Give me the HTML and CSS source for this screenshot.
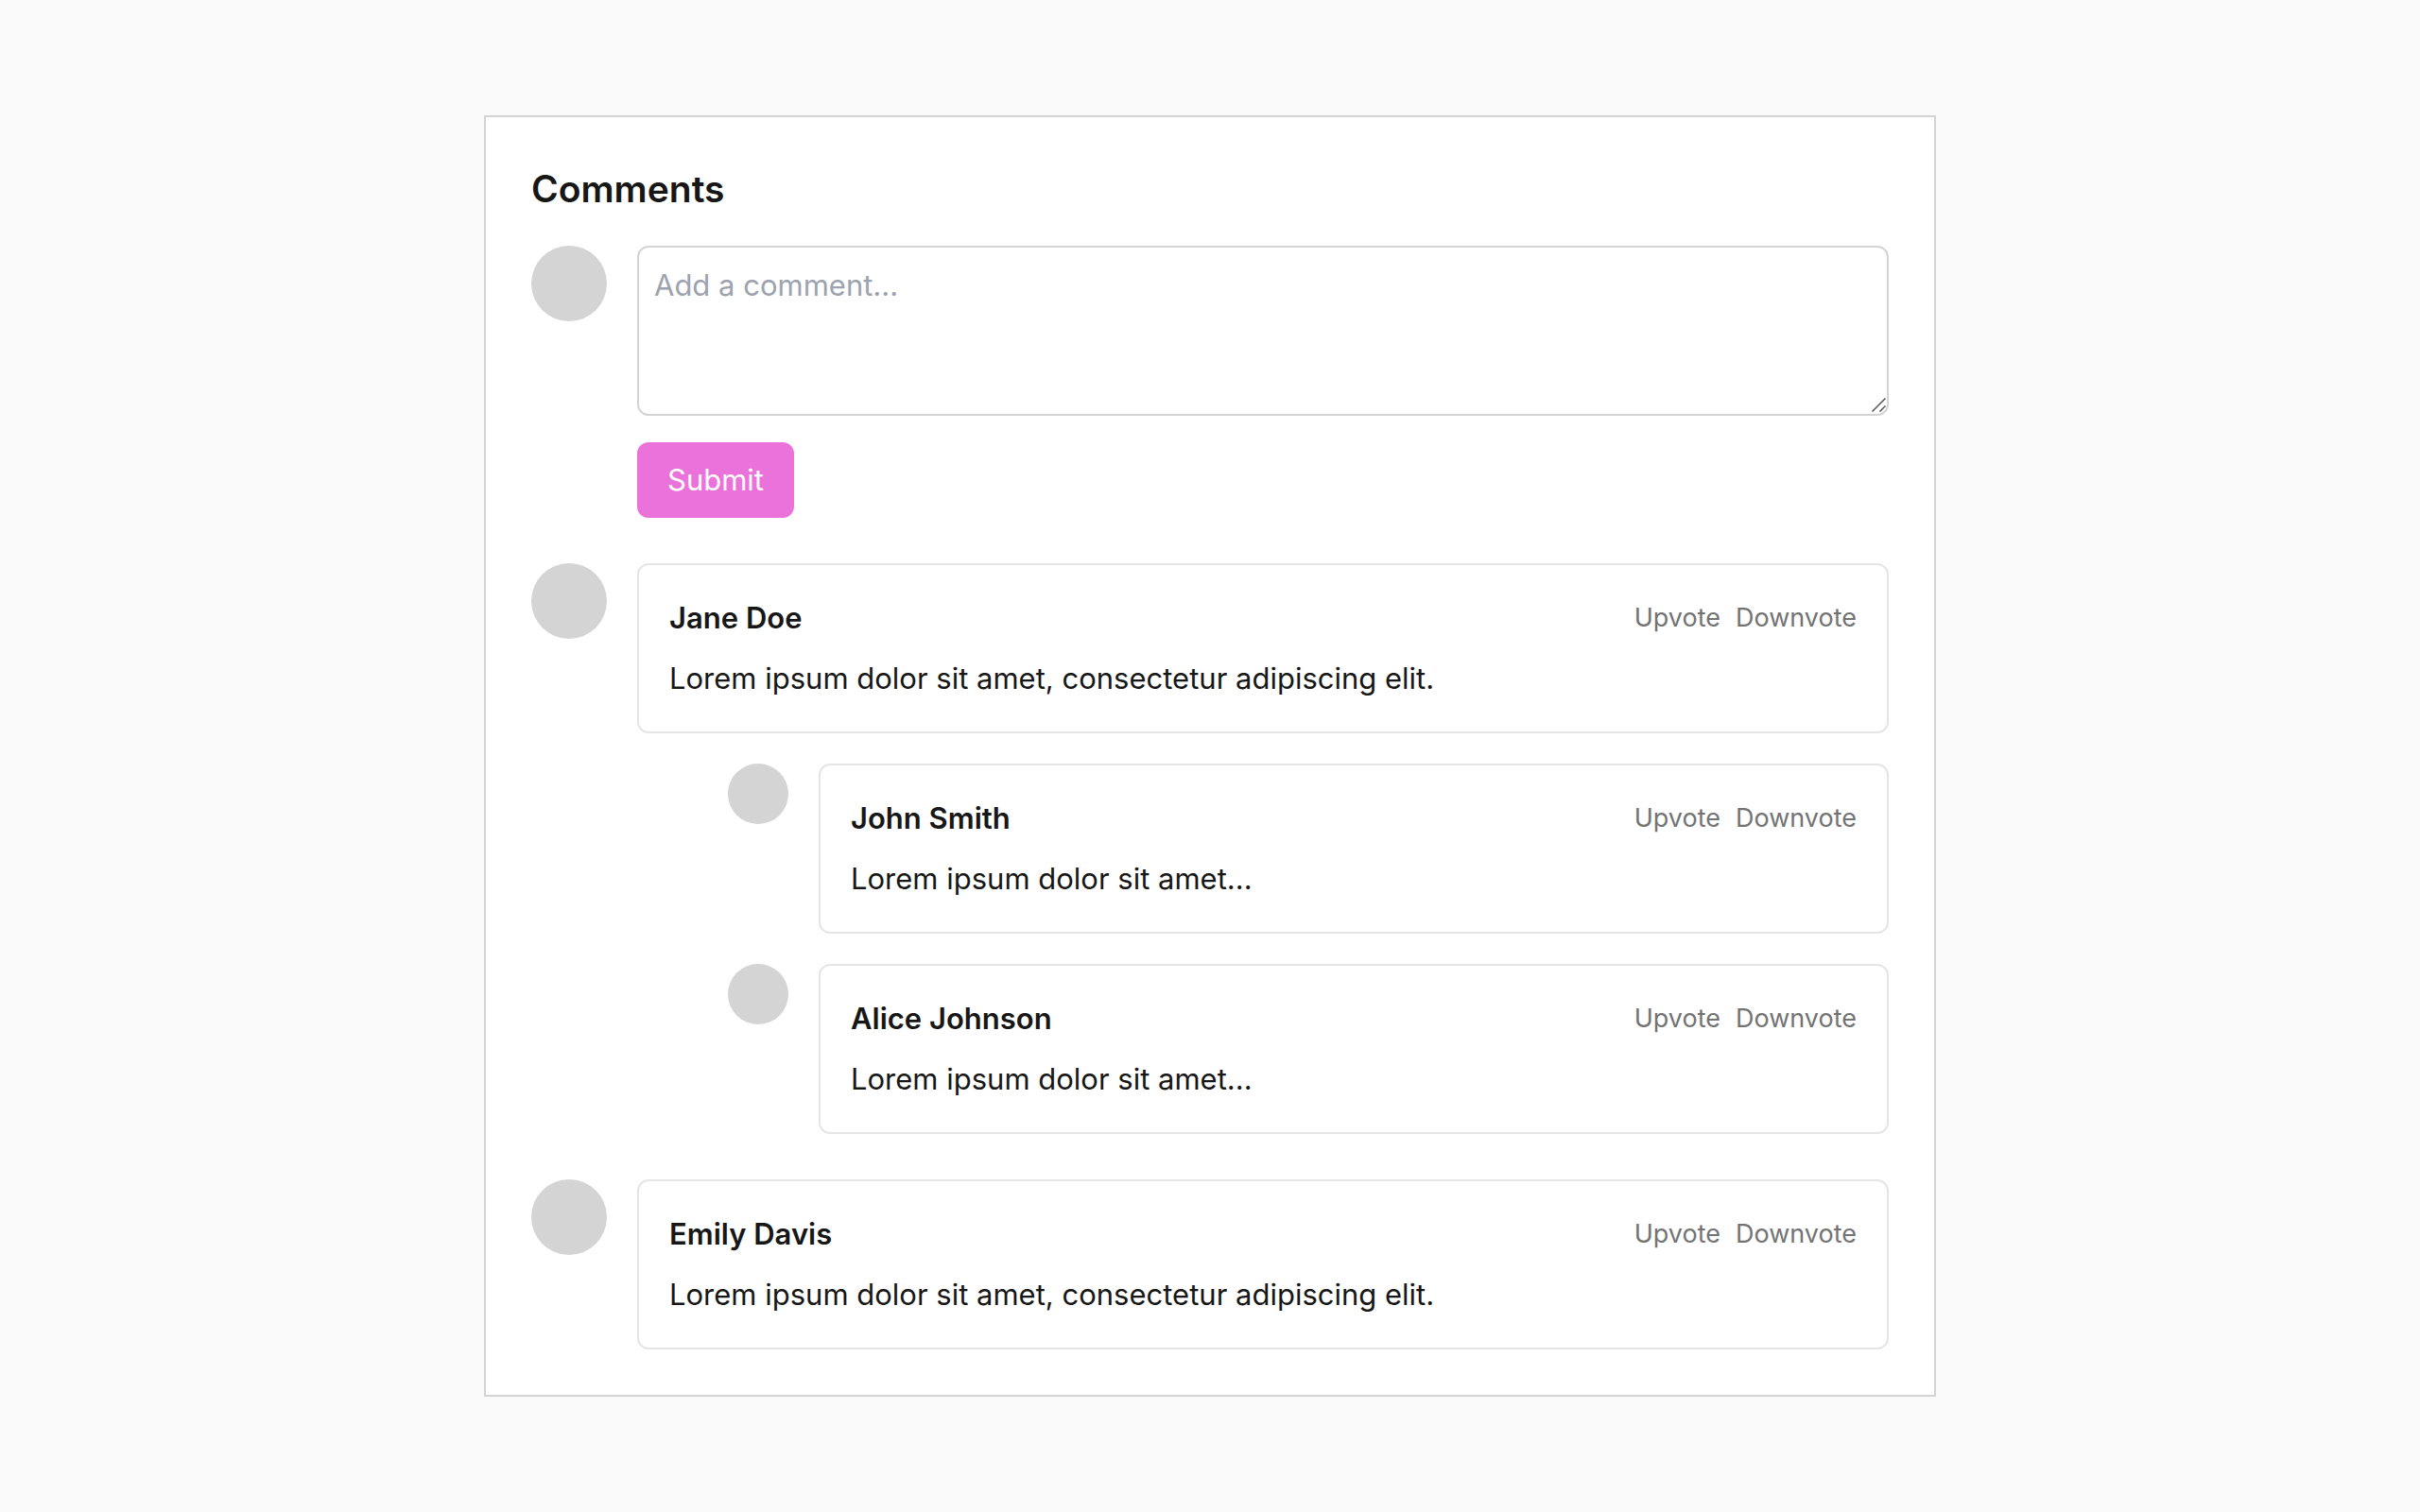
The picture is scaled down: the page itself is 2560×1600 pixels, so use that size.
FILE: index.html
```html
<!DOCTYPE html>
<html lang="en">
<head>
    <meta charset="UTF-8">
    <meta name="viewport" content="width=device-width, initial-scale=1.0">
    <title>Comments</title>
    <link rel="stylesheet" href="styles.css">
</head>
<body>
    <main class="comments">
        <h1>Comments</h1>

        <form class="row">
            <div class="avatar"></div>
            <div class="form-body">
                <div class="input-wrap">
                    <textarea id="comment" aria-label="Add a comment" placeholder="Add a comment..."></textarea>
                    <svg class="grip" viewBox="0 0 15 15" aria-hidden="true">
                        <path d="M0.5 14.5L14.5 0.5M8.5 14.5L14.5 8.5" />
                    </svg>
                </div>
                <button type="submit" class="submit">Submit</button>
            </div>
        </form>

        <div class="thread">
            <article class="row">
                <div class="avatar"></div>
                <div class="card">
                    <div class="card-header">
                        <h2>Jane Doe</h2>
                        <div class="votes">
                            <button type="button">Upvote</button>
                            <button type="button">Downvote</button>
                        </div>
                    </div>
                    <p>Lorem ipsum dolor sit amet, consectetur adipiscing elit.</p>
                </div>
            </article>

            <div class="replies">
                <article class="row">
                    <div class="avatar avatar-small"></div>
                    <div class="card">
                        <div class="card-header">
                            <h2>John Smith</h2>
                            <div class="votes">
                                <button type="button">Upvote</button>
                                <button type="button">Downvote</button>
                            </div>
                        </div>
                        <p>Lorem ipsum dolor sit amet...</p>
                    </div>
                </article>

                <article class="row">
                    <div class="avatar avatar-small"></div>
                    <div class="card">
                        <div class="card-header">
                            <h2>Alice Johnson</h2>
                            <div class="votes">
                                <button type="button">Upvote</button>
                                <button type="button">Downvote</button>
                            </div>
                        </div>
                        <p>Lorem ipsum dolor sit amet...</p>
                    </div>
                </article>
            </div>
        </div>

        <div class="thread">
            <article class="row">
                <div class="avatar"></div>
                <div class="card">
                    <div class="card-header">
                        <h2>Emily Davis</h2>
                        <div class="votes">
                            <button type="button">Upvote</button>
                            <button type="button">Downvote</button>
                        </div>
                    </div>
                    <p>Lorem ipsum dolor sit amet, consectetur adipiscing elit.</p>
                </div>
            </article>
        </div>
    </main>
</body>
</html>
```
FILE: styles.css
```css
* {
    box-sizing: border-box;
    margin: 0;
    padding: 0;
}
body {
    display: flex;
    align-items: center;
    justify-content: center;
    min-height: 100vh;
    font-family: Inter, sans-serif;
    font-size: 31px;
    line-height: 48px;
    color: #171717;
    background-color: #fafafa;
}
button, textarea {
    font: inherit;
}
.comments {
    width: 60%;
    padding: 48px;
    background-color: #fff;
    border: 2px solid #d4d4d4;
}
h1 {
    font-size: 39px;
    font-weight: 600;
    line-height: 56px;
    margin-bottom: 32px;
}
.row {
    display: flex;
    align-items: flex-start;
    gap: 32px;
}
.avatar {
    flex: none;
    width: 80px;
    height: 80px;
    border-radius: 50%;
    background-color: #d4d4d4;
}
.avatar-small {
    width: 64px;
    height: 64px;
}
.form-body {
    flex: 1;
}
.input-wrap {
    position: relative;
    margin-bottom: 28px;
}
textarea {
    display: block;
    width: 100%;
    height: 180px;
    padding: 16px;
    color: inherit;
    background-color: #fff;
    border: 2px solid #d4d4d4;
    border-radius: 12px;
    resize: none;
}
textarea::placeholder {
    color: #9ca3af;
}
.grip {
    position: absolute;
    right: 3px;
    bottom: 4px;
    width: 15px;
    height: 15px;
    fill: none;
    stroke: #555;
    stroke-width: 1.5;
}
.submit {
    display: block;
    padding: 16px 32px;
    color: #fff;
    background-color: #ec72db;
    border: none;
    border-radius: 12px;
    cursor: pointer;
}
.thread {
    margin-top: 48px;
}
.replies {
    display: flex;
    flex-direction: column;
    gap: 32px;
    margin-top: 32px;
    margin-left: 208px;
}
.card {
    flex: 1;
    padding: 32px;
    border: 2px solid #e5e5e5;
    border-radius: 12px;
}
.card-header {
    display: flex;
    align-items: center;
    justify-content: space-between;
    margin-bottom: 16px;
}
h2 {
    font-size: 31px;
    font-weight: 600;
    line-height: 48px;
}
.votes {
    display: flex;
    gap: 16px;
}
.votes button {
    font-size: 27px;
    line-height: 40px;
    color: #737373;
    background: none;
    border: none;
    cursor: pointer;
}
```
